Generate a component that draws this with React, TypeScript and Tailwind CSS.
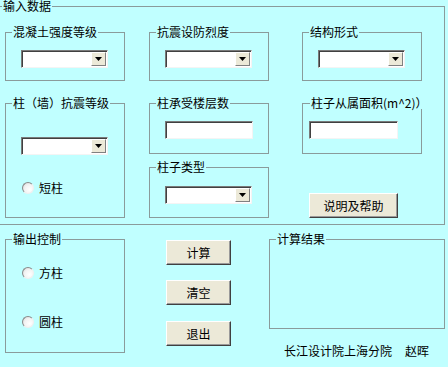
import React from "react";

const FONT = { fontFamily: '"Noto Sans CJK SC", "Noto Sans", sans-serif' };

function Legend({ children, className = "" }: { children: React.ReactNode; className?: string }) {
  return (
    <legend className={"ml-[6px] px-px text-[12px] leading-[12px] text-black " + className}>{children}</legend>
  );
}

function Combo({ w = "w-[87px]" }: { w?: string }) {
  return (
    <div
      className={
        "flex h-[18px] items-stretch border border-t-[#7a7a7a] border-l-[#7a7a7a] border-r-[#f4f4f4] border-b-[#f4f4f4] bg-white shadow-[inset_1px_1px_0_#404040] " +
        w
      }
    >
      <div className="flex-1" />
      <div className="mt-px mb-px mr-px flex w-[15px] items-center justify-center border border-t-[#ffffff] border-l-[#ffffff] border-r-[#808080] border-b-[#808080] bg-[#ece9d8]">
        <svg width="7" height="4" viewBox="0 0 7 4">
          <polygon points="0,0 7,0 3.5,4" fill="#000" />
        </svg>
      </div>
    </div>
  );
}

function TextBox({ w = "w-[88px]" }: { w?: string }) {
  return (
    <div
      className={
        "h-[18px] border border-t-[#7a7a7a] border-l-[#7a7a7a] border-r-[#f4f4f4] border-b-[#f4f4f4] bg-white shadow-[inset_1px_1px_0_#404040] " +
        w
      }
    />
  );
}

function Radio({ label }: { label: string }) {
  return (
    <div className="flex h-[14px] items-center">
      <div className="h-[12px] w-[12px] rounded-full border border-t-[#8a8a8a] border-l-[#8a8a8a] border-r-[#f0f0f0] border-b-[#f0f0f0] bg-[radial-gradient(circle_at_65%_65%,#ffffff_0%,#f2f2f2_55%,#cfcfcf_100%)]" />
      <span className="ml-[5px] text-[12px] leading-[14px] text-black">{label}</span>
    </div>
  );
}

function Btn({ label, className = "" }: { label: string; className?: string }) {
  return (
    <div
      className={
        "flex items-center justify-center border border-t-[#ffffff] border-l-[#ffffff] border-r-[#404040] border-b-[#404040] bg-[#ece9d8] text-[12px] leading-[14px] text-black shadow-[inset_-1px_-1px_0_#9a9a9a] " +
        className
      }
    >
      {label}
    </div>
  );
}

const box = "border border-[#8a9b9b] w-[120px] min-w-0";

export default function App() {
  return (
    <div className="h-[367px] w-[448px] overflow-hidden bg-[#c0ffff]" style={FONT}>
      {/* 输入数据 */}
      <fieldset className="ml-[-1px] h-[225px] w-[446px] border border-[#8a9b9b]">
        <legend className="ml-[2px] px-px text-[12px] leading-[12px] text-black">输入数据</legend>
        <div className="flex pl-[5px] pt-[14px]">
          {/* col 1 */}
          <div className="flex w-[120px] flex-col">
            <fieldset className={box + " h-[55px]"}>
              <Legend>混凝土强度等级</Legend>
              <div className="pl-[15px] pt-[12px]">
                <Combo />
              </div>
            </fieldset>
            <fieldset className={box + " mt-[16px] h-[121px]"}>
              <Legend>柱（墙）抗震等级</Legend>
              <div className="pl-[15px] pt-[28px]">
                <Combo />
                <div className="ml-px mt-[26px]">
                  <Radio label="短柱" />
                </div>
              </div>
            </fieldset>
          </div>
          {/* col 2 */}
          <div className="ml-[24px] flex w-[120px] flex-col">
            <fieldset className={box + " h-[55px]"}>
              <Legend>抗震设防烈度</Legend>
              <div className="pl-[15px] pt-[12px]">
                <Combo />
              </div>
            </fieldset>
            <fieldset className={box + " mt-[16px] h-[57px]"}>
              <Legend>柱承受楼层数</Legend>
              <div className="pl-[15px] pt-[12px]">
                <TextBox />
              </div>
            </fieldset>
            <fieldset className={box + " mt-[7px] h-[57px]"}>
              <Legend>柱子类型</Legend>
              <div className="pl-[15px] pt-[13px]">
                <Combo />
              </div>
            </fieldset>
          </div>
          {/* col 3 */}
          <div className="ml-[33px] flex w-[120px] flex-col">
            <fieldset className={box + " h-[55px]"}>
              <Legend>结构形式</Legend>
              <div className="pl-[15px] pt-[12px]">
                <Combo />
              </div>
            </fieldset>
            <fieldset className={box + " mt-[16px] h-[57px]"}>
              <Legend className="ml-[7px] whitespace-nowrap">柱子从属面积(m^2)）</Legend>
              <div className="pl-[6px] pt-[12px]">
                <TextBox w="w-[89px]" />
              </div>
            </fieldset>
            <Btn label="说明及帮助" className="ml-[7px] mt-[39px] h-[25px] w-[89px]" />
          </div>
        </div>
      </fieldset>

      {/* lower section */}
      <div className="mt-[8px] flex">
        <fieldset className={box + " ml-[5px] h-[120px]"}>
          <Legend>输出控制</Legend>
          <div className="pl-[16px] pt-[21px]">
            <Radio label="方柱" />
            <div className="mt-[35px]">
              <Radio label="圆柱" />
            </div>
          </div>
        </fieldset>
        <div className="ml-[41px] flex flex-col pt-[7px]">
          <Btn label="计算" className="h-[25px] w-[65px]" />
          <Btn label="清空" className="mt-[15px] h-[25px] w-[65px]" />
          <Btn label="退出" className="mt-[16px] h-[25px] w-[65px]" />
        </div>
        <div className="ml-[38px] flex w-[176px] flex-col">
          <fieldset className="h-[96px] w-[176px] border border-[#8a9b9b]">
            <Legend>计算结果</Legend>
          </fieldset>
          <div className="mt-[15px] whitespace-nowrap pl-[15px] text-[12px] leading-[14px] text-black">
            长江设计院上海分院<span className="ml-[13px]">赵晖</span>
          </div>
        </div>
      </div>
    </div>
  );
}
